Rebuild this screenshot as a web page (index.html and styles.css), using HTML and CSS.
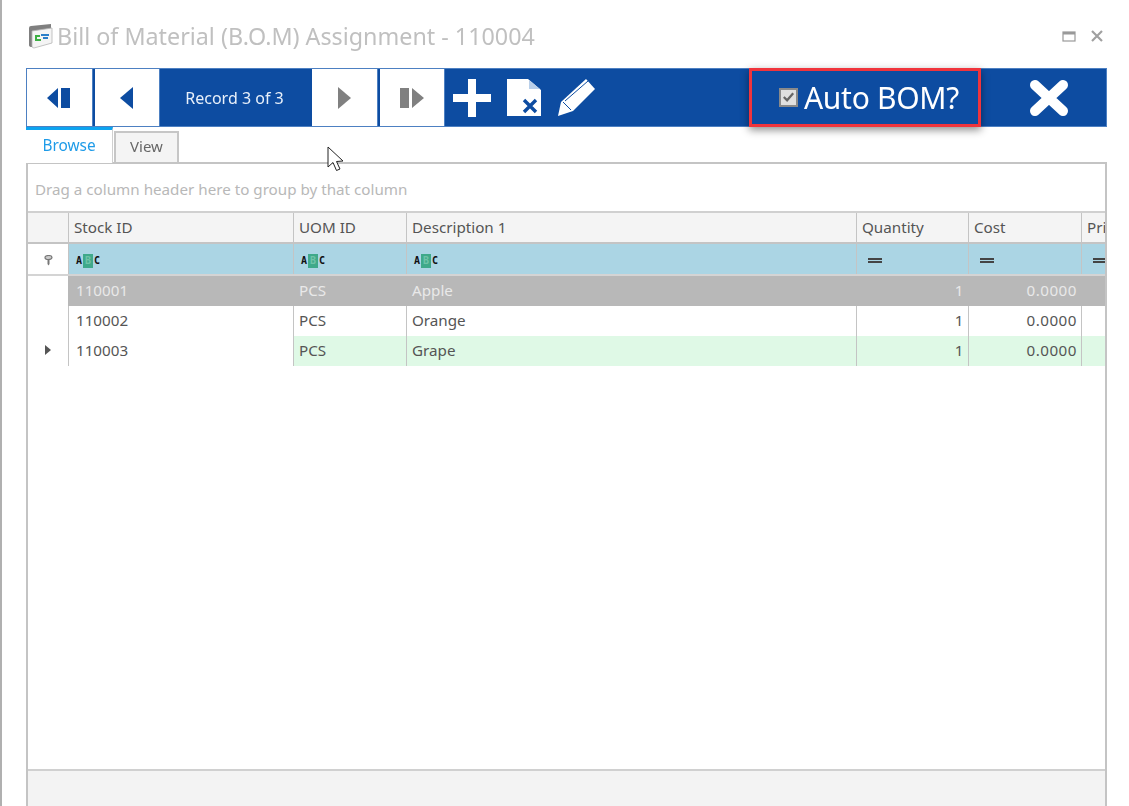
FILE: index.html
```html
<!DOCTYPE html>
<html lang="en">
<head>
<meta charset="utf-8">
<title>Bill of Material (B.O.M) Assignment - 110004</title>
<link rel="stylesheet" href="styles.css">
</head>
<body>
<div class="page">
  <div class="window">
    <header class="titlebar">
      <svg class="app-icon" width="25" height="25" viewBox="0 0 25 25">
        <path d="M1 4 Q1 2 3 2 L23 0 V6 L4 8 V23 Q1 23 1 21 Z" fill="#7f7f7f"/>
        <path d="M4 7 L24 4 V19 L6 24 Q4 24 4 22 Z" fill="#f4f4f4" stroke="#b5b5b5" stroke-width=".8"/>
        <path d="M7 11 H12 V13 H9 V15 H13 V17 H7 Z" fill="#3cb043"/>
        <path d="M13 10 H21 V12 H13 Z M15 13 H20 V15 H15 Z" fill="#2b7fc9"/>
      </svg>
      <h1 class="title">Bill of Material (B.O.M) Assignment - 110004</h1>
      <div class="window-controls">
        <svg width="14" height="12" viewBox="0 0 14 12"><rect x="1" y="2" width="12" height="9" fill="none" stroke="#999" stroke-width="1.200"/><rect x="1" y="2" width="12" height="2.500" fill="#999"/></svg>
        <svg width="14" height="12" viewBox="0 0 14 12"><path d="M2 1 L12 11 M12 1 L2 11" stroke="#a0a0a0" stroke-width="2.200"/></svg>
      </div>
    </header>

    <nav class="toolbar">
      <button class="nav-btn">
        <svg width="24" height="24" viewBox="0 0 24 24"><path d="M11 2 V22 L0 12 Z M14 2 H23 V22 H14 Z" fill="#0d4ca1"/></svg>
      </button>
      <button class="nav-btn">
        <svg width="14" height="24" viewBox="0 0 14 24"><path d="M13 1 V23 L0 12 Z" fill="#0d4ca1"/></svg>
      </button>
      <span class="record">Record 3 of 3</span>
      <button class="nav-btn">
        <svg width="14" height="24" viewBox="0 0 14 24"><path d="M1 1 V23 L14 12 Z" fill="#808080"/></svg>
      </button>
      <button class="nav-btn">
        <svg width="24" height="24" viewBox="0 0 24 24"><path d="M0 2 H9 V22 H0 Z M12 2 L24 12 L12 22 Z" fill="#808080"/></svg>
      </button>
      <svg class="tool plus" width="38" height="38" viewBox="0 0 38 38"><path d="M15 0 H23 V15 H38 V23 H23 V38 H15 V23 H0 V15 H15 Z" fill="#fff"/></svg>
      <svg class="tool doc" width="34" height="38" viewBox="0 0 34 38"><path d="M0 0 H21 L34 11 V37 H0 Z" fill="#fff"/><path d="M22 1 L33 10 H22 Z" fill="#b9cfe9"/><path d="M17 21 L29 33 M29 21 L17 33" stroke="#0d4ca1" stroke-width="3.400"/></svg>
      <svg class="tool pencil" width="37" height="38" viewBox="0 0 37 38"><path d="M0 37 L3 23 L28 0 L37 10 L15 32 Z" fill="#fff"/><path d="M7 22 L30 2 M5 23 L13 31" fill="none" stroke="#0d4ca1" stroke-width="1"/></svg>
      <label class="auto-bom">
        <span class="checkbox"><svg width="16" height="16" viewBox="0 0 16 16"><path d="M3 8 L6.500 11.500 L13 4" fill="none" stroke="#666" stroke-width="2.400"/></svg></span>
        <span>Auto BOM?</span>
      </label>
      <svg class="close-x" width="38" height="36" viewBox="0 0 38 36"><path d="M5 5 L33 31 M33 5 L5 31" stroke="#fff" stroke-width="10" stroke-linecap="round"/></svg>
    </nav>

    <div class="tabs">
      <div class="tab active">Browse</div>
      <div class="tab">View</div>
    </div>

    <section class="panel">
      <div class="group-hint">Drag a column header here to group by that column</div>
      <div class="grid">
        <div class="row head">
          <div class="cell ind"></div>
          <div class="cell">Stock ID</div>
          <div class="cell">UOM ID</div>
          <div class="cell">Description 1</div>
          <div class="cell">Quantity</div>
          <div class="cell">Cost</div>
          <div class="cell clip">Price</div>
        </div>
        <div class="row filter">
          <div class="cell ind">
            <svg width="9" height="11" viewBox="0 0 9 11"><ellipse cx="4.500" cy="2.500" rx="3.500" ry="2" fill="#ccc" stroke="#777" stroke-width="1.200"/><path d="M3.500 4 H5.500 V9 L4.500 10.500 L3.500 9 Z" fill="#777"/></svg>
          </div>
          <div class="cell"><span class="abc">A<b>B</b>C</span></div>
          <div class="cell"><span class="abc">A<b>B</b>C</span></div>
          <div class="cell"><span class="abc">A<b>B</b>C</span></div>
          <div class="cell"><span class="eq"></span></div>
          <div class="cell"><span class="eq"></span></div>
          <div class="cell clip"><span class="eq"></span></div>
        </div>
        <div class="row data selected">
          <div class="cell ind"></div>
          <div class="cell lead">110001</div>
          <div class="cell">PCS</div>
          <div class="cell">Apple</div>
          <div class="cell num">1</div>
          <div class="cell num">0.0000</div>
          <div class="cell clip"></div>
        </div>
        <div class="row data">
          <div class="cell ind"></div>
          <div class="cell lead">110002</div>
          <div class="cell">PCS</div>
          <div class="cell">Orange</div>
          <div class="cell num">1</div>
          <div class="cell num">0.0000</div>
          <div class="cell clip"></div>
        </div>
        <div class="row data current">
          <div class="cell ind">
            <svg width="6" height="10" viewBox="0 0 6 10"><path d="M0 0 L6 5 L0 10 Z" fill="#555"/></svg>
          </div>
          <div class="cell lead focus">110003</div>
          <div class="cell">PCS</div>
          <div class="cell">Grape</div>
          <div class="cell num">1</div>
          <div class="cell num">0.0000</div>
          <div class="cell clip"></div>
        </div>
      </div>
      <div class="footer"></div>
    </section>
  </div>
  <svg class="cursor" width="20" height="28" viewBox="0 0 20 28"><path d="M1 1 V21 L6 16.500 L9.500 24.500 L13 23 L9.500 15.500 L16 15 Z" fill="#fff" stroke="#222" stroke-width="1"/></svg>
</div>
</body>
</html>
```
FILE: styles.css
```css
* { box-sizing: border-box; }
html, body { margin: 0; height: 100%; background: #fff; overflow: hidden; }
body { font-family: "Noto Sans", "DejaVu Sans", sans-serif; color: #444; }

.page {
  position: relative;
  height: 806px;
  width: 1129px;
  padding-left: 24px;
  border-left: 2px solid #b0b0b0;
  filter: blur(.4px);
}
.window { width: 1081px; height: 806px; display: flex; flex-direction: column; }

.titlebar { height: 68px; flex: none; display: flex; align-items: center; padding-top: 4px; }
.app-icon { margin: 0 4px 0 2px; flex: none; }
.title { margin: 0; font-size: 23.300px; font-weight: 400; color: #c0c0c0; white-space: nowrap; }
.window-controls { margin-left: auto; margin-right: 3px; display: flex; gap: 14px; align-items: center; }

.toolbar {
  height: 59px; flex: none;
  background: #0d4ca1;
  border: 1px solid #4d80c2;
  display: flex; align-items: center;
}
.nav-btn {
  height: 57px; width: 64.500px; flex: none;
  background: #fff; border: 0; padding: 0;
  display: flex; align-items: center; justify-content: center;
  box-shadow: 1px 0 0 #4d80c2;
}
.nav-btn + .nav-btn { margin-left: 3px; }
.record { width: 151px; margin-right: 2px; flex: none; text-align: center; color: #e8f0fa; font-size: 16px; }
.tool { flex: none; }
.plus { margin-left: 9px; }
.doc { margin-left: 16px; }
.pencil { margin-left: 17px; }
.auto-bom {
  position: relative;
  margin-left: 154px;
  width: 232px; height: 59px; flex: none;
  margin-top: -1px;
  border: 3px solid #f0343c;
  box-shadow: 0 3px 8px rgba(0, 0, 0, .45);
  display: flex; align-items: center; padding-left: 27px; gap: 6px;
  color: #fff; font-size: 30px; letter-spacing: -.3px; white-space: nowrap;
}
.checkbox {
  width: 19px; height: 19px; flex: none;
  background: #e0e0e0; border: 2px solid #8a8a8a;
  display: flex; align-items: center; justify-content: center;
}
.close-x { margin-left: 49px; flex: none; }

.tabs { height: 35px; flex: none; display: flex; align-items: flex-end; position: relative; z-index: 1; }
.tab {
  width: 65px; height: 31px; margin-left: 1px;
  background: #f4f4f4; border: 2px solid #c6c6c6; border-bottom: 0;
  color: #666; font-size: 15px; text-align: center; line-height: 26px;
}
.tab.active {
  width: 87px; height: 36px; margin-left: 0; margin-bottom: -1px;
  background: #fff; color: #1e9be8; font-size: 15.400px;
  border: 0; border-top: 3px solid #0ca4f0; border-right: 1px solid #d0d0d0;
  line-height: 32px;
}

.panel {
  flex: 1; min-height: 0;
  border: 2px solid #c4c4c4; border-bottom: 0;
  display: flex; flex-direction: column;
  background: #fff;
}
.group-hint {
  height: 49px; flex: none;
  padding-left: 7px;
  line-height: 51px;
  font-size: 15.200px; color: #b8b8b8;
  border-bottom: 2px solid #d0d0d0;
  white-space: nowrap;
}
.grid { flex: 1; min-height: 0; overflow: hidden; }
.row {
  display: grid;
  grid-template-columns: 41px 225px 113px 450px 112px 113px 23px;
  font-size: 15.200px;
}
.cell {
  border-right: 1px solid #c4c4c4;
  padding-left: 5px;
  white-space: nowrap; overflow: hidden;
  display: flex; align-items: center;
}
.cell.clip { border-right: 0; }
.cell.ind { padding: 0; justify-content: center; background: #fff; }
.cell.lead { padding-left: 7px; }
.cell.num { justify-content: flex-end; padding: 0 4px 0 0; letter-spacing: .5px; }

.head { height: 31px; background: #f4f4f4; border-bottom: 2px solid #c4c4c4; color: #555; }
.head .cell { padding-bottom: 2px; }
.head .ind { background: #f4f4f4; }
.filter { height: 32px; background: #abd5e4; border-bottom: 2px solid #d4d4d4; }
.filter .cell { padding-top: 3px; }
.abc { font: 700 10px/10px "DejaVu Sans Mono", monospace; color: #111; display: inline-flex; align-items: center; margin-left: 2px; }
.abc b { background: #3fa98a; color: #6fc3a8; padding: 2px 2px; margin: 0 1px; font-weight: 700; }
.eq { display: block; width: 14px; height: 5px; margin-left: 6px; border-top: 2px solid #444; border-bottom: 2px solid #444; }

.data { height: 30px; background: #fff; color: #555; }
.data .cell { padding-bottom: 2px; }
.selected { background: #b8b8b8; color: #e9e9e9; }
.selected .cell { border-right-color: #b8b8b8; }
.current { background: #dff9e6; }
.focus { background: #fff; }

.footer { height: 37px; flex: none; background: #f3f3f3; border-top: 2px solid #d0d0d0; }

.cursor { position: absolute; left: 325px; top: 146px; }
```
